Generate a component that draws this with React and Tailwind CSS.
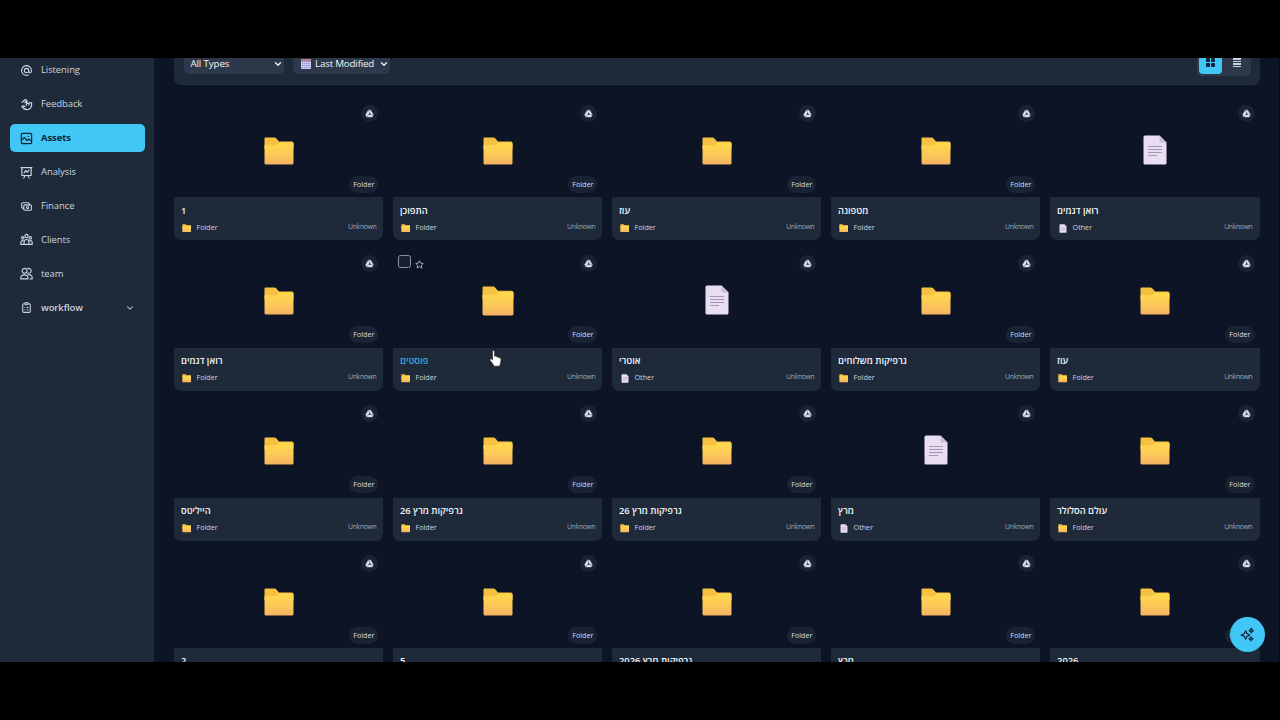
import { TbAt, TbCash, TbClipboardList, TbChevronDown, TbStar } from 'react-icons/tb'

const strokeProps = {
  viewBox: '0 0 24 24',
  fill: 'none',
  stroke: 'currentColor',
  strokeWidth: 2,
  strokeLinecap: 'round',
  strokeLinejoin: 'round',
}

function FeedbackIcon({ className }) {
  return (
    <svg {...strokeProps} strokeWidth={2.3} className={className}>
      <path d="M4 8l6-5.500 3 2.500-1.500 8M9 8.500L11 6M12 9.500c4 1.500 9-3 9.500 0 .5 6.500-2 12-8.500 12-4 0-7-2-9.500-6l3.500-1 2 1.500M16.500 10v3" />
    </svg>
  )
}

function AssetsIcon({ className }) {
  return (
    <svg {...strokeProps} strokeWidth={2.2} className={className}>
      <rect x="2.500" y="2.500" width="19" height="19" rx="2" />
      <path d="M3 15l5-5 5 6 3-3 5 4M15 8h1" />
    </svg>
  )
}

function AnalysisIcon({ className }) {
  return (
    <svg {...strokeProps} strokeWidth={2.2} className={className}>
      <path d="M2 3h20M3.500 3v14.500h17V3M7 22l2-4M17 22l-2-4M7.500 12.500l3-4 3 3 3-4" />
    </svg>
  )
}

function ClientsIcon({ className }) {
  return (
    <svg {...strokeProps} strokeWidth={2.1} className={className}>
      <circle cx="12" cy="5.500" r="3" />
      <circle cx="5" cy="9" r="2.200" />
      <circle cx="19" cy="9" r="2.200" />
      <path d="M7.500 21v-4.500a4.500 4.500 0 0 1 9 0V21zM7.500 21h-6v-3.500A3.500 3.500 0 0 1 6 14.300M16.500 21h6v-3.500a3.500 3.500 0 0 0-4.500-3.200" />
    </svg>
  )
}

function TeamIcon({ className }) {
  return (
    <svg {...strokeProps} strokeWidth={2.1} className={className}>
      <circle cx="8.500" cy="7" r="4.500" />
      <path d="M14 3a4.500 4.500 0 1 1 0 8M1.500 22v-2a6.500 5.500 0 0 1 13 0v2zM15 14.200c4-.7 7.500 1.500 7.500 5.300V22h-4" />
    </svg>
  )
}

function DriveIcon({ className }) {
  return (
    <svg viewBox="0 0 24 24" className={className}>
      <path d="M9 3h6l7 12-3 6H5l-3-6z" fill="currentColor" stroke="currentColor" strokeWidth="1.500" strokeLinejoin="round" />
      <path d="M12.500 9.500l3.500 6H9z" fill="#1a2333" />
      <path d="M9.500 3l3 6.500M22 15.500h-6M5.500 21l3.500-5.500" stroke="#1a2333" strokeWidth="1" />
    </svg>
  )
}

function SparklesIcon({ className }) {
  return (
    <svg {...strokeProps} strokeWidth={1.9} className={className}>
      <path d="M9 6l2 4.500L15.500 13 11 15l-2 4.500L7 15l-5-2 5-2.500zM18 2l1 2.500L21.500 6 19 7l-1 2.500L17 7l-2.500-1L17 4.500zM17.500 15.500l1 2.200 2.500 1.100-2.500 1.100-1 2.300-1-2.300-2.300-1.100 2.300-1.100z" />
    </svg>
  )
}

function FolderArt({ className }) {
  return (
    <svg viewBox="0 0 30 28" className={className}>
      <defs>
        <linearGradient id="folderFront" x1="0" y1="0" x2="0" y2="1">
          <stop offset="0" stopColor="#ffd94b" />
          <stop offset="0.500" stopColor="#fccb58" />
          <stop offset="1" stopColor="#f5b264" />
        </linearGradient>
      </defs>
      <path d="M1.500 0.500H10.500q1 0 1.700.8L15 4.500h13q1.500 0 1.500 1.500v6H.5V1.500q0-1 1-1z" fill="#f6c043" />
      <path d="M.5 8.200h11.300q1 0 1.700-.8l1-1.200q.6-.7 1.500-.7h12q1.500 0 1.500 1.500v19q0 1.500-1.500 1.500H2Q.5 27.500.5 26z" fill="url(#folderFront)" />
    </svg>
  )
}

function DocumentArt({ className }) {
  return (
    <svg viewBox="0 0 24 30" className={className}>
      <path d="M2 .5h14.500l7 7V28q0 1.500-1.500 1.500H2Q.5 29.500.5 28V2Q.5.5 2 .5z" fill="#e9ddf2" />
      <path d="M16.500.5l7 7H18q-1.500 0-1.500-1.500z" fill="#c9bdd6" />
      <path d="M5 11.500h14M5 14.500h14M5 17.500h14M5 20.500h9" stroke="#a597b3" strokeWidth="1.100" />
    </svg>
  )
}

function CalendarArt({ className }) {
  return (
    <svg viewBox="0 0 10 10" className={className}>
      <rect width="10" height="10" rx="1" fill="#c9c8f0" />
      <path d="M0 1a1 1 0 0 1 1-1h8a1 1 0 0 1 1 1v1.800H0z" fill="#b07f9f" />
      <path d="M1 4.500h8M1 6.500h8M1 8.500h8" stroke="#8d93dc" strokeWidth=".9" strokeDasharray="1.400 .7" />
    </svg>
  )
}

function HandCursor({ className }) {
  return (
    <svg viewBox="0 0 12 16" className={className}>
      <path
        d="M3.200 1.500q0-1 .9-1t1 1v4.300l.5-.1q.9-.1 1.200.5.900-.2 1.300.6 1.100-.2 1.400.6 1.700-.2 1.700 1.400 0 3.700-1.500 6.400H4.600Q3.600 12.800 1 9.800q-.6-1 .2-1.400.9-.3 2 1z"
        fill="#fff"
        stroke="#111"
        strokeWidth=".5"
      />
    </svg>
  )
}

const navItems = [
  { label: 'Listening', icon: TbAt },
  { label: 'Feedback', icon: FeedbackIcon },
  { label: 'Assets', icon: AssetsIcon, active: true },
  { label: 'Analysis', icon: AnalysisIcon },
  { label: 'Finance', icon: TbCash },
  { label: 'Clients', icon: ClientsIcon },
  { label: 'team', icon: TeamIcon },
  { label: 'workflow', icon: TbClipboardList, group: true },
]

const assets = [
  { name: '1' },
  { name: 'התפוכן' },
  { name: 'עוז' },
  { name: 'מטפונה' },
  { name: 'רואן דגמים', other: true },
  { name: 'רואן דגמים' },
  { name: 'פוסטים', hovered: true },
  { name: 'אוטרי', other: true },
  { name: 'גרפיקות משלוחים' },
  { name: 'עוז' },
  { name: 'הייליטס' },
  { name: 'גרפיקות מרץ 26' },
  { name: 'גרפיקות מרץ 26' },
  { name: 'מרץ', other: true },
  { name: 'עולם הסלולר' },
  { name: '2' },
  { name: '5' },
  { name: 'גרפיקות מרץ 2026' },
  { name: 'מרץ' },
  { name: '2026' },
]

function Sidebar() {
  return (
    <nav className="-mt-[1.800px] flex h-[610px] w-[154px] shrink-0 flex-col gap-[5.400px] bg-[#1e2939] pr-[9px] pl-[9.500px]">
      {navItems.map(({ label, icon: Icon, active, group }) => (
        <div
          key={label}
          className={`flex h-[28.500px] shrink-0 items-center rounded-[5px] pr-[10px] pl-[10.500px] text-[9.500px] ${
            active ? 'bg-[#41c7f6] font-bold text-[#10223a]' : 'text-[#cbd5e1]'
          } ${group ? 'font-semibold' : ''}`}
        >
          <Icon className="size-[13px] shrink-0" />
          <span className="ml-[8px] flex-1 tracking-[-0.1px]">{label}</span>
          {group && <TbChevronDown className="size-[10px]" strokeWidth={2.5} />}
        </div>
      ))}
    </nav>
  )
}

function Toolbar() {
  return (
    <div className="flex h-[27px] shrink-0 items-end rounded-b-[7px] border-b border-[#243143] bg-[#1e2939] pr-[9px] pb-[10px] pl-[9.500px] text-[9.800px] text-[#f1f5f9]">
      <div className="flex h-[21px] w-[100px] items-center justify-between rounded-[5px] bg-[#2d394a] pt-px pr-px pl-[7px]">
        <span className="tracking-[-0.150px]">All Types</span>
        <TbChevronDown className="size-[10px]" strokeWidth={3} />
      </div>
      <div className="ml-[9.500px] flex h-[21px] w-[97px] items-center rounded-[5px] bg-[#2d394a] pt-px pr-px pl-[8px]">
        <CalendarArt className="size-[10px]" />
        <span className="ml-[4px] flex-1 tracking-[-0.200px] whitespace-nowrap">Last Modified</span>
        <TbChevronDown className="size-[10px]" strokeWidth={3} />
      </div>
      <div className="-mb-[2px] ml-auto flex h-[27px] w-[53.500px] shrink-0 items-end rounded-[5px] bg-[#2d394a] p-[2px]">
        <div className="flex h-[23px] w-[23px] items-center justify-center rounded-[4px] bg-[#41c7f6]">
          <div className="grid grid-cols-2 gap-[1px]">
            <i className="size-[4px] rounded-[1px] bg-[#10223a]" />
            <i className="size-[4px] rounded-[1px] bg-[#10223a]" />
            <i className="size-[4px] rounded-[1px] bg-[#10223a]" />
            <i className="size-[4px] rounded-[1px] bg-[#10223a]" />
          </div>
        </div>
        <div className="flex h-[23px] flex-1 flex-col items-center justify-center gap-[1px] pl-[3px]">
          <i className="h-[1.500px] w-[8px] bg-[#cbd5e1]" />
          <i className="h-[1.500px] w-[8px] bg-[#cbd5e1]" />
          <i className="h-[1.500px] w-[8px] bg-[#cbd5e1]" />
          <i className="h-[1.500px] w-[8px] bg-[#cbd5e1]" />
        </div>
      </div>
    </div>
  )
}

function AssetCard({ name, other, hovered }) {
  return (
    <div className="flex h-[140.600px] flex-col overflow-hidden rounded-[7px]">
      <div className="relative flex h-[97.600px] shrink-0 items-center justify-center pt-[4.500px]">
        {other ? (
          <DocumentArt className="-mt-[2px] h-[30px] w-[24px]" />
        ) : (
          <FolderArt className={hovered ? 'h-[30px] w-[32px]' : 'h-[28px] w-[30px]'} />
        )}
        {hovered && (
          <div className="absolute top-[4.500px] left-[5px] flex items-center gap-[4.500px]">
            <span className="size-[12.500px] rounded-[2.500px] border border-[#8b93a3] bg-[#171f30]" />
            <TbStar className="mt-[5px] size-[9px] text-[#cbd5e1]" />
          </div>
        )}
        <span className="absolute top-[5px] right-[5px] flex size-[17px] items-center justify-center rounded-full bg-[#1a2333]">
          <DriveIcon className="size-[9px] text-[#dbe2f0]" />
        </span>
        {!other && (
          <span className="absolute right-[5px] bottom-[4.500px] flex h-[17px] items-center rounded-full bg-[#1a2333] px-[4px] text-[7.200px] text-[#d5dce8]">
            Folder
          </span>
        )}
      </div>
      <div className="flex flex-1 flex-col bg-[#1e2939] px-[7px] pt-[6.200px]">
        <div className={`h-[14px] text-[9.300px] leading-[14px] font-semibold ${hovered ? 'text-[#35b0dc]' : 'text-[#f4f7fb]'}`}>
          {name}
        </div>
        <div className="mt-[3px] flex h-[13px] items-center text-[7.200px] text-[#cbd5e1]">
          <span className="flex w-[11px] justify-center pt-[2px]">
            {other ? <DocumentArt className="h-[9px] w-[8px]" /> : <FolderArt className="h-[8.500px] w-[9.500px]" />}
          </span>
          <span className="ml-[4.500px]">{other ? 'Other' : 'Folder'}</span>
          <span className="ml-auto text-[6.900px] tracking-[-0.350px] text-[#9aa8bb]">Unknown</span>
        </div>
      </div>
    </div>
  )
}

export default function App() {
  return (
    <div className="h-screen overflow-hidden bg-black py-[58px] font-['Open_Sans','Noto_Sans',sans-serif]">
      <div className="relative flex h-[604px] overflow-hidden bg-[#0d1425]">
        <Sidebar />
        <main className="flex flex-1 flex-col border-r border-[#060a14] pr-[19.500px] pl-[20px]">
          <Toolbar />
          <div className="mt-[14.900px] grid grid-cols-5 gap-[9.600px]">
            {assets.map((asset, i) => (
              <AssetCard key={i} {...asset} />
            ))}
          </div>
        </main>
        <button className="absolute top-[559px] left-[1230px] flex size-[35px] items-center justify-center rounded-full bg-[#41c7f6] text-[#10223a]">
          <SparklesIcon className="size-[15px]" />
        </button>
        <HandCursor className="absolute top-[292px] left-[489px] h-[17px] w-[13px]" />
      </div>
    </div>
  )
}
